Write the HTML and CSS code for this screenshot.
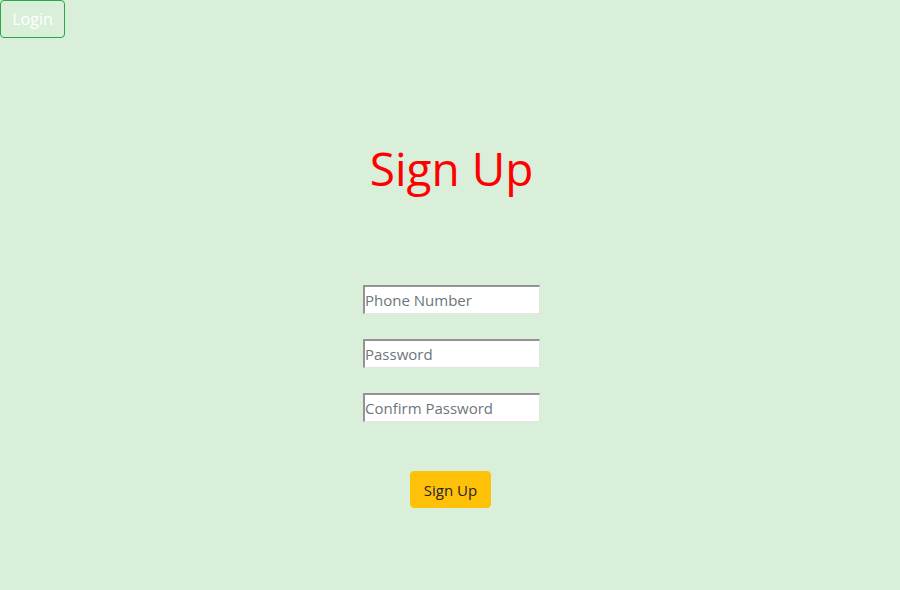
FILE: index.html
```html
<!DOCTYPE html>
<html>
<head>
<meta charset="utf-8">
<link rel="stylesheet" href="styles.css">
</head>
<body>
<div class="top"><button class="btn-login">Login</button></div>
<main class="page">
  <h1 class="title">Sign Up</h1>
  <form class="form">
    <input class="field" type="text" placeholder="Phone Number">
    <input class="field" type="password" placeholder="Password">
    <input class="field" type="password" placeholder="Confirm Password">
    <button class="btn-signup" type="button">Sign Up</button>
  </form>
</main>
</body>
</html>
```
FILE: styles.css
```css
html, body {
  margin: 0;
  height: 100%;
}
body {
  background: #d9efd9;
  font-family: "Open Sans", "Noto Sans", sans-serif;
}
.top {
  display: flex;
}
.btn-login {
  width: 65px;
  height: 38px;
  background: transparent;
  border: 1px solid #28a745;
  border-radius: 4px;
  color: #ffffff;
  font-family: inherit;
  font-size: 16px;
  padding: 0;
}
.page {
  display: flex;
  flex-direction: column;
  align-items: center;
  padding-left: 3px;
}
.title {
  margin: 98px 0 0 0;
  font-size: 46px;
  font-weight: 400;
  line-height: 64px;
  color: #ff0000;
}
.form {
  display: flex;
  flex-direction: column;
  align-items: center;
  margin-top: 85px;
}
.field {
  box-sizing: border-box;
  width: 177px;
  height: 29px;
  margin-bottom: 25px;
  padding: 0 1px 0 0;
  border-style: solid;
  border-width: 2px 1px 1px 2px;
  border-color: #939393 #e4e4e4 #e4e4e4 #939393;
  background: #fff;
  font-family: inherit;
  font-size: 15px;
  color: #333;
}
.field::placeholder {
  color: #6c757d;
}
.btn-signup {
  margin-top: 24px;
  margin-right: 2px;
  width: 81px;
  height: 37px;
  background: #ffc107;
  border: 1px solid #ffc107;
  border-radius: 4px;
  color: #212529;
  font-family: inherit;
  font-size: 15px;
  padding: 0;
}
```
